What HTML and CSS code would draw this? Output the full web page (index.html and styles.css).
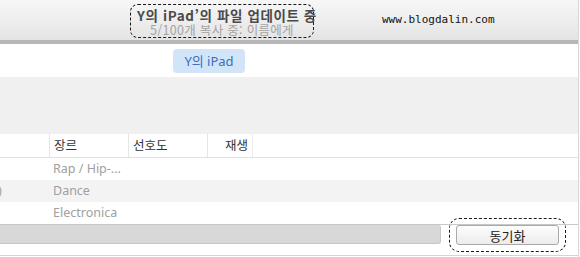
FILE: index.html
```html
<!DOCTYPE html>
<html lang="ko">
<head>
  <meta charset="UTF-8">
  <title>iTunes 동기화</title>
  <link rel="stylesheet" href="styles.css">
</head>
<body>
<div class="window">
  <div class="top">
    <div class="status">
      <div class="status-title">Y의 iPad’의 파일 업데이트 중</div>
      <div class="status-sub">5/100개 복사 중: 이름에게</div>
    </div>
    <div class="watermark">www.blogdalin.com</div>
  </div>
  <div class="divider"></div>

  <div class="device-bar">
    <span class="device">Y의 iPad</span>
  </div>
  <div class="blank"></div>

  <div class="songs">
    <div class="row head">
      <div class="cell"></div>
      <div class="cell">장르</div>
      <div class="cell">선호도</div>
      <div class="cell right">재생</div>
      <div class="cell"></div>
    </div>
    <div class="row">
      <div class="cell"></div>
      <div class="cell">Rap / Hip-...</div>
      <div class="cell"></div>
      <div class="cell"></div>
      <div class="cell"></div>
    </div>
    <div class="row alt">
      <div class="cell cut">)</div>
      <div class="cell">Dance</div>
      <div class="cell"></div>
      <div class="cell"></div>
      <div class="cell"></div>
    </div>
    <div class="row">
      <div class="cell"></div>
      <div class="cell">Electronica</div>
      <div class="cell"></div>
      <div class="cell"></div>
      <div class="cell"></div>
    </div>
  </div>

  <div class="footer">
    <div class="capacity"></div>
    <button class="sync">동기화</button>
  </div>
</div>
</body>
</html>
```

FILE: styles.css
```css
body {
  margin: 0;
  font-family: "Noto Sans", "Noto Sans CJK KR", sans-serif;
  background: #fff;
}

.window {
  width: 578px;
  height: 257px;
  border-right: 1px solid #d6d6d6;
  overflow: hidden;
}

/* top status area */
.top {
  height: 40px;
  display: flex;
  align-items: flex-start;
  background: linear-gradient(#f7f7f7, #e4e4e4);
}

.status {
  box-sizing: border-box;
  width: 184px;
  height: 34px;
  margin: 4px 0 0 130px;
  padding-top: 3px;
  border: 1.5px dashed #1a1a1a;
  border-radius: 8px;
  text-align: center;
  white-space: nowrap;
}

.status-title {
  font-family: "Noto Sans CJK KR", sans-serif;
  font-size: 13.5px;
  font-weight: bold;
  letter-spacing: 0.6px;
  line-height: 15px;
  color: #4a4a4a;
  margin-left: 4px;
  margin-right: -6px;
}

.status-sub {
  margin-top: 1px;
  font-family: "Noto Sans CJK KR", sans-serif;
  font-size: 12.5px;
  letter-spacing: 0.3px;
  line-height: 12px;
  color: #a4a4a4;
}

.watermark {
  margin: 13px 0 0 68px;
  font-family: "DejaVu Sans Mono", monospace;
  font-size: 11px;
  color: #111;
}

.divider {
  height: 4px;
  background: #b7b7b7;
}

/* device */
.device-bar {
  height: 33px;
  padding: 5px 0 0 173px;
  box-sizing: border-box;
}

.device {
  display: inline-block;
  width: 72px;
  height: 24px;
  line-height: 24px;
  text-align: center;
  border-radius: 4px;
  background: #d2e4f8;
  color: #3b6fbf;
  font-size: 13px;
}

.blank {
  height: 57px;
  background: #f0f0f0;
}

/* song list */
.row {
  display: grid;
  grid-template-columns: 49px 79px 79px 45px 1fr;
  height: 22px;
  font-size: 12.5px;
  color: #a0a0a0;
}

.row.head {
  height: 23px;
  border-bottom: 1px solid #e2e2e2;
  color: #333;
  font-family: "Noto Sans CJK KR", sans-serif;
  font-size: 12.5px;
}

.row.alt {
  background: #f3f3f3;
}

.cell {
  padding: 0 4px;
  line-height: 22px;
  white-space: nowrap;
  overflow: hidden;
}

.head .cell + .cell {
  border-left: 1px solid #e6e6e6;
}

.head .cell:last-child {
  border-left: 1px solid #ececec;
}

.cell.right {
  text-align: right;
}

.cell.cut {
  padding: 0;
  text-indent: -2px;
}

/* footer */
.footer {
  height: 32px;
  box-sizing: border-box;
  border-top: 1px solid #c8c8c8;
  border-bottom: 1px solid #d4d4d4;
  display: flex;
  align-items: flex-start;
}

.capacity {
  width: 441px;
  height: 19px;
  box-sizing: border-box;
  background: #d8d8d8;
  border: 1px solid #c6c6c6;
  border-left: none;
  border-top: none;
  border-radius: 0 3px 3px 0;
}

.sync {
  width: 103px;
  height: 20px;
  margin-left: 15px;
  padding: 0;
  box-sizing: border-box;
  border: 1px solid #a9a9a9;
  border-radius: 3px;
  background: linear-gradient(#fdfdfd, #ececec);
  font-family: "Noto Sans CJK KR", sans-serif;
  font-size: 13px;
  line-height: 17px;
  color: #222;
  outline: 1.5px dashed #1a1a1a;
  outline-offset: 6px;
}
```
